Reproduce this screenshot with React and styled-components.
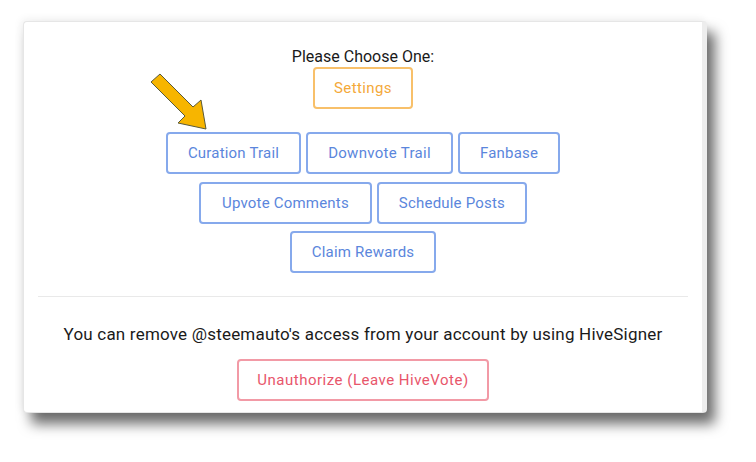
import styled, { createGlobalStyle } from "styled-components";

const GlobalStyle = createGlobalStyle`
  html, body {
    margin: 0;
    padding: 0;
    background: #fff;
  }
  body {
    font-family: Roboto, "Liberation Sans", sans-serif;
  }
`;

const Page = styled.div`
  width: 756px;
  height: 462px;
  padding: 21px 0 0 23px;
  box-sizing: border-box;
  position: relative;
  overflow: hidden;
`;

const Card = styled.div`
  width: 684px;
  height: 392px;
  box-sizing: border-box;
  background: #fff;
  border: 1px solid #e6e6e6;
  border-right: 5px solid #ededed;
  border-radius: 4px;
  padding: 25px 16px 0;
  display: flex;
  flex-direction: column;
  align-items: center;
  box-shadow: 8px 11px 13px rgba(0, 0, 0, 0.58), -2px -2px 8px rgba(0, 0, 0, 0.06);
`;

const Heading = styled.div`
  font-size: 16px;
  line-height: 20px;
  color: #1a1a1a;
`;

const Row = styled.div`
  display: flex;
  justify-content: center;
  gap: 5px;
  margin-top: ${(p) => p.mt || 0}px;
`;

const colors = {
  blue: { border: "#86a9ec", text: "#5b86dc" },
  orange: { border: "#f8c06a", text: "#f4a93a" },
  red: { border: "#f29aa6", text: "#e8566b" },
};

const Btn = styled.button`
  height: 42px;
  padding: 0 ${(p) => p.px || 20}px;
  background: #fff;
  border: 2px solid ${(p) => colors[p.tone || "blue"].border};
  color: ${(p) => colors[p.tone || "blue"].text};
  border-radius: 4px;
  font-family: Roboto, "Liberation Sans", sans-serif;
  font-size: 15px;
  letter-spacing: ${(p) => p.ls ?? 0.2}px;
  cursor: pointer;
`;

const Divider = styled.hr`
  width: 650px;
  border: none;
  border-top: 1px solid #e9e9e9;
  margin: 23px 0 0;
`;

const Note = styled.p`
  margin: 26px 0 0;
  font-size: 17px;
  line-height: 22px;
  color: #1a1a1a;
  letter-spacing: 0.2px;
`;

const Arrow = styled.svg`
  position: absolute;
  left: 148px;
  top: 70px;
`;

export default function App() {
  return (
    <>
      <GlobalStyle />
      <Page>
        <Card>
          <Heading>Please Choose One:</Heading>
          <Btn tone="orange" px={19} ls={0.4}>Settings</Btn>
          <Row mt={23}>
            <Btn>Curation Trail</Btn>
            <Btn ls={0.3}>Downvote Trail</Btn>
            <Btn>Fanbase</Btn>
          </Row>
          <Row mt={8}>
            <Btn px={21}>Upvote Comments</Btn>
            <Btn>Schedule Posts</Btn>
          </Row>
          <Row mt={7}>
            <Btn>Claim Rewards</Btn>
          </Row>
          <Divider />
          <Note>You can remove @steemauto's access from your account by using HiveSigner</Note>
          <Row mt={14}>
            <Btn tone="red" px={18} ls={0.5}>Unauthorize (Leave HiveVote)</Btn>
          </Row>
        </Card>
        <Arrow width="66" height="64" viewBox="0 0 66 64">
          <path
            d="M3 12 L12 4 L45 37 L53 30 L58 59 L30 53 L37 46 Z"
            fill="#f7b500"
            stroke="#5a5a3a"
            strokeWidth="1"
            strokeLinejoin="miter"
          />
        </Arrow>
      </Page>
    </>
  );
}
